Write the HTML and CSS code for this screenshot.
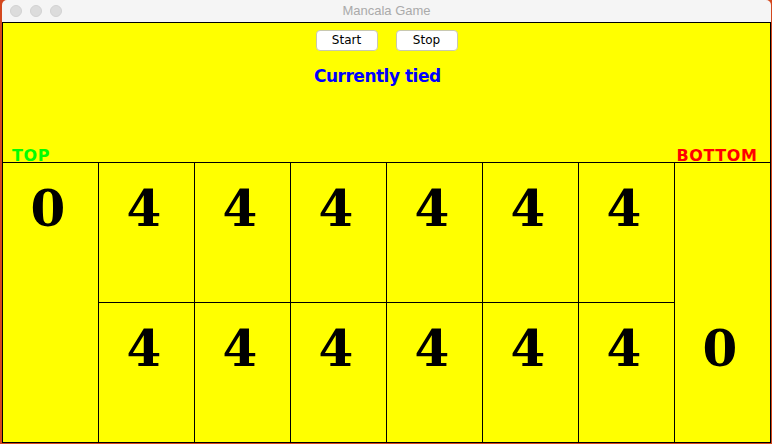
FILE: index.html
```html
<!DOCTYPE html>
<html>
<head>
<meta charset="utf-8">
<title>Mancala Game</title>
<link rel="stylesheet" href="styles.css">
</head>
<body>
<div class="window">
  <div class="titlebar">
    <div class="lights">
      <span class="light"></span>
      <span class="light"></span>
      <span class="light"></span>
    </div>
    <div class="title">Mancala Game</div>
  </div>
  <div class="panel">
    <div class="top-area">
      <div class="buttons">
        <button class="btn">Start</button>
        <button class="btn">Stop</button>
      </div>
      <div class="status">Currently tied</div>
      <div class="labels">
        <span class="label-top">TOP</span>
        <span class="label-bottom">BOTTOM</span>
      </div>
    </div>
    <div class="board">
      <div class="store store-left"><span class="num">0</span></div>
      <div class="pit pit-top"><span class="num">4</span></div>
      <div class="pit pit-top"><span class="num">4</span></div>
      <div class="pit pit-top"><span class="num">4</span></div>
      <div class="pit pit-top"><span class="num">4</span></div>
      <div class="pit pit-top"><span class="num">4</span></div>
      <div class="pit pit-top"><span class="num">4</span></div>
      <div class="store store-right"><span class="num">0</span></div>
      <div class="pit pit-bottom"><span class="num">4</span></div>
      <div class="pit pit-bottom"><span class="num">4</span></div>
      <div class="pit pit-bottom"><span class="num">4</span></div>
      <div class="pit pit-bottom"><span class="num">4</span></div>
      <div class="pit pit-bottom"><span class="num">4</span></div>
      <div class="pit pit-bottom"><span class="num">4</span></div>
    </div>
  </div>
</div>
</body>
</html>
```

FILE: styles.css
```css
html, body {
  margin: 0;
  padding: 0;
}
body {
  background: #d4481e;
  width: 772px;
  height: 444px;
  overflow: hidden;
}
.window {
  margin-left: 2px;
  width: 769px;
}
.titlebar {
  height: 22px;
  background: #f5f5f5;
  border-radius: 5px 5px 0 0;
  display: flex;
  align-items: center;
  position: relative;
}
.lights {
  display: flex;
  gap: 8px;
  padding-left: 8px;
}
.light {
  width: 12px;
  height: 12px;
  border-radius: 50%;
  background: #dcdcdc;
  box-sizing: border-box;
  border: 1px solid #d2d2d2;
}
.title {
  position: absolute;
  left: 0;
  right: 0;
  top: 3px;
  text-align: center;
  font-family: "Liberation Sans", Arial, sans-serif;
  font-size: 13px;
  line-height: 16px;
  color: #aaaaaa;
}
.panel {
  background: #ffff00;
  border: 1px solid #000;
  border-bottom: none;
  width: 767px;
}
.top-area {
  height: 139px;
  display: flex;
  flex-direction: column;
}
.buttons {
  display: flex;
  justify-content: center;
  gap: 18px;
  padding-top: 7px;
}
.btn {
  width: 62px;
  height: 21px;
  margin: 0;
  padding: 0;
  background: #ffffff;
  border: 1px solid #c8c8b0;
  border-radius: 4px;
  font-family: "DejaVu Sans", sans-serif;
  font-size: 12px;
  line-height: 19px;
  color: #000;
}
.status {
  margin-top: 15px;
  padding-left: 311px;
  font-family: "DejaVu Sans", sans-serif;
  font-weight: bold;
  font-size: 17px;
  letter-spacing: -0.5px;
  line-height: 20px;
  color: #0000ff;
}
.labels {
  margin-top: auto;
  display: flex;
  justify-content: space-between;
  padding: 0 13px 0 9px;
  font-family: "DejaVu Sans", sans-serif;
  font-weight: bold;
  font-size: 16px;
  letter-spacing: 0.6px;
  line-height: 12px;
}
.label-top {
  color: #00ff00;
}
.label-bottom {
  color: #ff0000;
  margin-right: -0.6px;
}
.board {
  display: grid;
  grid-template-columns: 95px repeat(6, 96px) 96px;
  grid-template-rows: 140px 139px;
  border-top: 1px solid #000;
  border-bottom: 1px solid #000;
}
.store, .pit {
  box-sizing: border-box;
  text-align: center;
  padding-right: 5px;
}
.pit, .store-right {
  border-left: 1px solid #000;
}
.store-left {
  grid-column: 1;
  grid-row: 1 / span 2;
  padding-top: 21px;
}
.store-right {
  grid-column: 8;
  grid-row: 1 / span 2;
  padding-top: 161px;
}
.pit-top {
  grid-row: 1;
  border-bottom: 1px solid #000;
  padding-top: 21px;
}
.pit-bottom {
  grid-row: 2;
  padding-top: 21px;
}
.num {
  font-family: "DejaVu Serif", serif;
  font-weight: bold;
  font-size: 50px;
  line-height: 50px;
  color: #000;
}
```
